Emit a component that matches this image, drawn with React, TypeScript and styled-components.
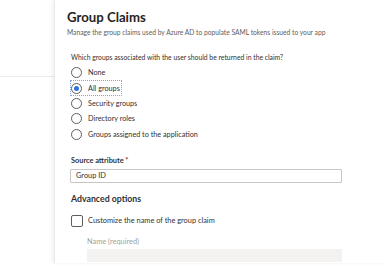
import React from 'react';
import styled, { createGlobalStyle } from 'styled-components';

const GlobalStyle = createGlobalStyle`
  body {
    margin: 0;
    background: #fff;
    font-family: Lato, "Open Sans", sans-serif;
    color: #323130;
  }
`;

const Page = styled.div`
  display: flex;
  width: 386px;
  height: 274px;
  overflow: hidden;
`;

const Rail = styled.div`
  width: 54px;
  flex-shrink: 0;
`;

const RailDivider = styled.div`
  height: 76px;
  border-bottom: 1px solid #edebe9;
`;

const Panel = styled.div`
  flex: 1;
  height: 263px;
  padding: 7px 0 0 12px;
  box-sizing: border-box;
  border-left: 1px solid #e8e8e8;
  box-shadow: -2px 0 4px rgba(0, 0, 0, 0.06);
  overflow: hidden;
`;

const Title = styled.h1`
  margin: 0;
  font-size: 13.2px;
  line-height: 20px;
  font-weight: 700;
  color: #252423;
`;

const Subtitle = styled.div`
  font-size: 6.7px;
  line-height: 10px;
  color: #605e5c;
`;

const Body = styled.div`
  padding-left: 4px;
  width: 271px;
`;

const Question = styled.div`
  margin-top: 15px;
  font-size: 6.8px;
  line-height: 10px;
`;

const RadioList = styled.div`
  display: flex;
  flex-direction: column;
  margin-top: 3px;
`;

const RadioRow = styled.label<{ $focused?: boolean }>`
  display: flex;
  align-items: center;
  gap: 6px;
  height: 15.4px;
  font-size: 7.25px;
  align-self: flex-start;
  padding: 0 2px 0 1px;
  margin-left: -1px;
  outline: ${(p) => (p.$focused ? '1px dotted #7aa7e0' : 'none')};
  outline-offset: -1px;
`;

const RadioCircle = styled.span<{ $checked?: boolean }>`
  width: 9px;
  height: 9px;
  border-radius: 50%;
  border: 1px solid #605e5c;
  display: flex;
  align-items: center;
  justify-content: center;
  flex-shrink: 0;
  &::after {
    content: '';
    width: 5px;
    height: 5px;
    border-radius: 50%;
    background: ${(p) => (p.$checked ? '#2f6fde' : 'transparent')};
  }
`;

const FieldLabel = styled.div`
  margin-top: 14px;
  font-size: 7.35px;
  line-height: 10px;
  font-weight: 700;
  span {
    color: #a4262c;
  }
`;

const Input = styled.div`
  margin-top: 3px;
  height: 14px;
  border: 1px solid #c8c6c4;
  border-radius: 1px;
  box-sizing: border-box;
  padding-left: 5px;
  font-size: 7.4px;
  line-height: 12px;
  margin-left: -1px;
`;

const SectionHeading = styled.div`
  margin-top: 9px;
  font-size: 8.75px;
  line-height: 13px;
  font-weight: 700;
`;

const CheckRow = styled.div`
  display: flex;
  align-items: center;
  gap: 5px;
  margin-top: 10px;
  font-size: 7.4px;
`;

const CheckBox = styled.span`
  width: 10px;
  height: 10px;
  border: 1px solid #605e5c;
  border-radius: 2px;
  flex-shrink: 0;
`;

const Indented = styled.div`
  padding-left: 16px;
`;

const MutedLabel = styled.div`
  margin-top: 10px;
  font-size: 7.4px;
  line-height: 10px;
  color: #a19f9d;
`;

const DisabledInput = styled.div`
  margin-top: 2px;
  height: 13px;
  background: #f3f2f1;
`;

const options = [
  'None',
  'All groups',
  'Security groups',
  'Directory roles',
  'Groups assigned to the application',
];

export default function App() {
  return (
    <>
      <GlobalStyle />
      <Page>
        <Rail>
          <RailDivider />
        </Rail>
        <Panel>
          <Title>Group Claims</Title>
          <Subtitle>
            Manage the group claims used by Azure AD to populate SAML tokens issued to your app
          </Subtitle>
          <Body>
            <Question>Which groups associated with the user should be returned in the claim?</Question>
            <RadioList>
              {options.map((o) => (
                <RadioRow key={o} $focused={o === 'All groups'}>
                  <RadioCircle $checked={o === 'All groups'} />
                  {o}
                </RadioRow>
              ))}
            </RadioList>
            <FieldLabel>
              Source attribute <span>*</span>
            </FieldLabel>
            <Input>Group ID</Input>
            <SectionHeading>Advanced options</SectionHeading>
            <CheckRow>
              <CheckBox />
              Customize the name of the group claim
            </CheckRow>
            <Indented>
              <MutedLabel>Name (required)</MutedLabel>
              <DisabledInput />
            </Indented>
          </Body>
        </Panel>
      </Page>
    </>
  );
}
